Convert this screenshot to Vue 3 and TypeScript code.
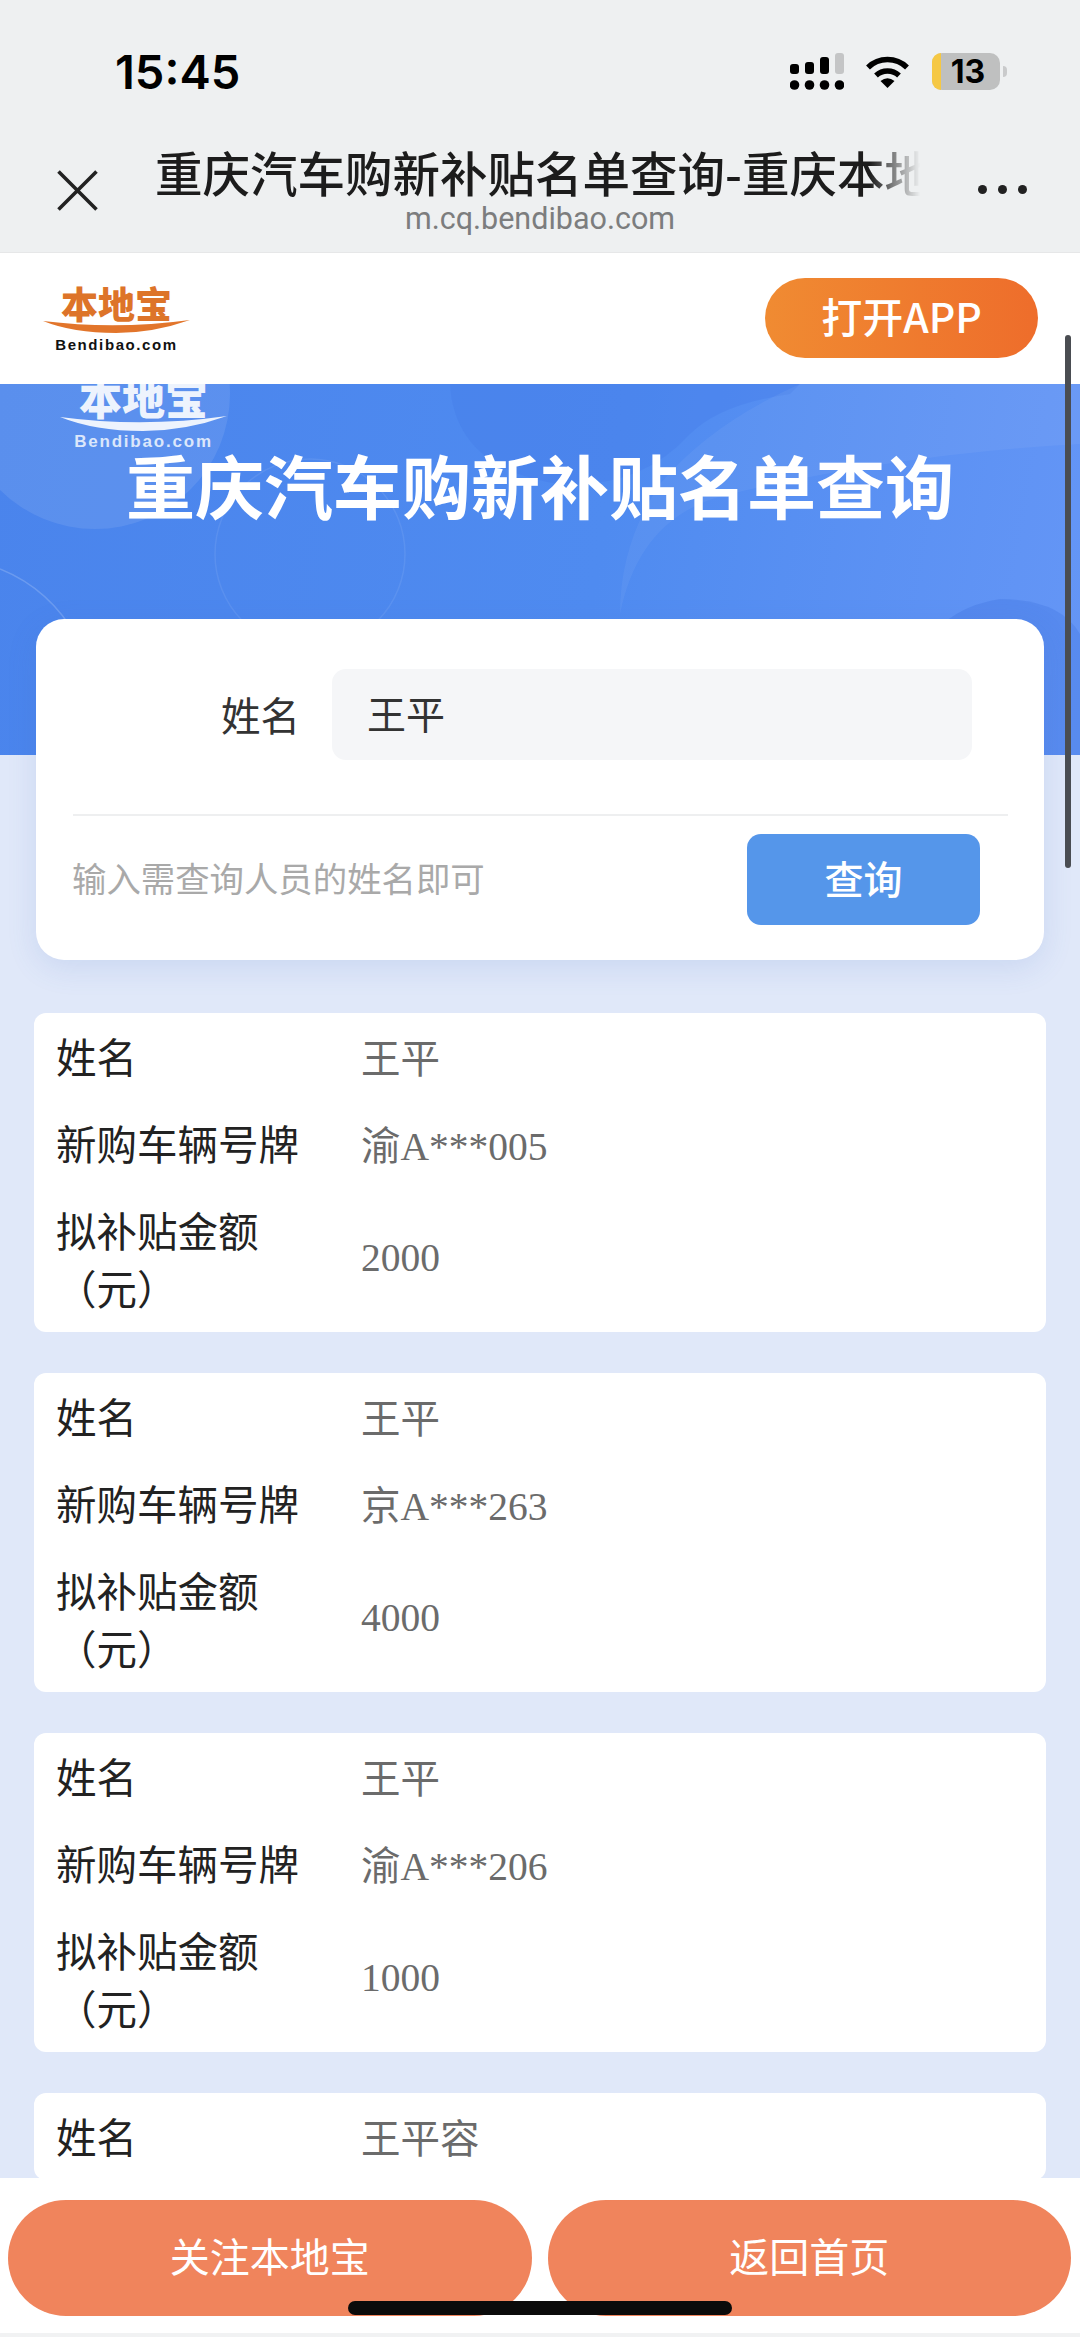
<template>
  <div class="page">
    <div class="topbar">
      <div class="status">
        <span class="time">15:45</span>
        <div class="status-icons">
          <svg class="signal" width="54" height="37" viewBox="0 0 54 37">
            <rect x="0" y="11" width="9" height="10" rx="3" fill="#000" />
            <rect x="15" y="9" width="9" height="12" rx="3" fill="#000" />
            <rect x="30" y="4" width="9" height="17" rx="3" fill="#000" />
            <rect x="45" y="0" width="9" height="21" rx="3" fill="#c4c5c6" />
            <circle cx="4.5" cy="32" r="4.8" fill="#000" />
            <circle cx="19.5" cy="32" r="4.8" fill="#000" />
            <circle cx="34.5" cy="32" r="4.8" fill="#000" />
            <circle cx="49.5" cy="32" r="4.8" fill="#000" />
          </svg>
          <svg class="wifi" width="45" height="33" viewBox="0 0 45 33">
            <path d="M3 12.5 A28 28 0 0 1 42 12.5" fill="none" stroke="#000" stroke-width="5.5" />
            <path d="M11 20.5 A17 17 0 0 1 34 20.5" fill="none" stroke="#000" stroke-width="5.5" />
            <path d="M15.5 26 Q22.5 20.5 29.5 26 L22.5 33 Z" fill="#000" />
          </svg>
          <div class="battery">
            <span class="battery-level"></span>
            <span class="battery-num">13</span>
            <span class="battery-nub"></span>
          </div>
        </div>
      </div>
      <div class="nav">
        <svg class="close" width="41" height="41" viewBox="0 0 41 41">
          <path d="M1.5 1.5 L39.5 39.5 M39.5 1.5 L1.5 39.5" stroke="#222" stroke-width="3.6" fill="none" />
        </svg>
        <div class="nav-title">
          <div class="nav-name">重庆汽车购新补贴名单查询-重庆本地宝</div>
          <div class="nav-url">m.cq.bendibao.com</div>
        </div>
        <div class="dots"><i></i><i></i><i></i></div>
      </div>
    </div>

    <header class="head">
      <div class="logo logo-orange">
        <div class="logo-cn">本地宝</div>
        <svg class="logo-arc" width="147" height="13" viewBox="0 0 147 13">
          <path d="M0 1 Q73 10 147 0 Q110 13 73 13 Q30 13 0 1 Z" />
        </svg>
        <div class="logo-en">Bendibao.com</div>
      </div>
      <button class="open-app"><span>打开APP</span></button>
    </header>

    <section class="banner">
      <svg class="banner-bg" width="1080" height="371" viewBox="0 0 1080 371">
        <circle cx="95" cy="10" r="135" fill="#fff" opacity="0.09" />
        <path d="M450 0 Q455 85 560 100 Q640 105 690 50 Q720 20 790 10 L800 0 Z" fill="#3f78e6" opacity="0.28" />
        <path d="M620 230 Q640 130 730 110 Q900 70 1080 60 L1080 0 L800 0 Q710 40 660 100 Q620 160 620 230 Z" fill="#fff" opacity="0.05" />
        <circle cx="310" cy="170" r="95" fill="none" stroke="#fff" stroke-width="1.5" opacity="0.08" />
        <path d="M0 185 Q50 205 78 255" fill="none" stroke="#fff" stroke-width="1.5" opacity="0.18" />
        <path d="M890 371 Q900 230 1000 215 Q1060 215 1080 250 L1080 371 Z" fill="#2f66d8" opacity="0.22" />
      </svg>
      <div class="logo logo-white">
        <div class="logo-cn">本地宝</div>
        <svg class="logo-arc" width="167" height="15" viewBox="0 0 167 15">
          <path d="M0 1 Q83 12 167 0 Q125 15 83 15 Q35 15 0 1 Z" />
        </svg>
        <div class="logo-en">Bendibao.com</div>
      </div>
      <h1 class="banner-title">重庆汽车购新补贴名单查询</h1>
    </section>

    <section class="search">
      <div class="search-row">
        <label class="search-label">姓名</label>
        <div class="search-input">王平</div>
      </div>
      <div class="search-line"></div>
      <div class="search-foot">
        <span class="search-hint">输入需查询人员的姓名即可</span>
        <button class="search-btn"><span>查询</span></button>
      </div>
    </section>

    <section class="results">
      <div v-for="(item, i) in records" :key="i" class="result">
        <div class="result-row">
          <div class="result-label">姓名</div>
          <div class="result-value">{{ item.name }}</div>
        </div>
        <template v-if="item.plate">
          <div class="result-row">
            <div class="result-label">新购车辆号牌</div>
            <div class="result-value">{{ item.plate }}</div>
          </div>
          <div class="result-row">
            <div class="result-label">拟补贴金额（元）</div>
            <div class="result-value result-amount">{{ item.amount }}</div>
          </div>
        </template>
      </div>
    </section>

    <div class="scrollbar"></div>

    <footer class="bottom">
      <button class="bottom-btn">关注本地宝</button>
      <button class="bottom-btn">返回首页</button>
      <div class="home-bar"></div>
    </footer>
  </div>
</template>

<script setup lang="ts">
interface ResultRecord {
  name: string
  plate?: string
  amount?: number
}

const records: ResultRecord[] = [
  { name: '王平', plate: '渝A***005', amount: 2000 },
  { name: '王平', plate: '京A***263', amount: 4000 },
  { name: '王平', plate: '渝A***206', amount: 1000 },
  { name: '王平容' },
]
</script>

<style>
html,
body {
  margin: 0;
  background: #e0e8f9;
}
</style>

<style scoped>
.page {
  position: relative;
  width: 1080px;
  height: 2337px;
  overflow: hidden;
  background: #e0e8f9;
  font-family: 'Noto Sans CJK SC', 'Liberation Sans', sans-serif;
}

.topbar {
  height: 253px;
  background: #eef0f1;
  box-sizing: border-box;
  padding-top: 48px;
  border-bottom: 1px solid #e6e7e8;
}

.status {
  display: flex;
  align-items: center;
  justify-content: space-between;
  height: 46px;
  padding: 0 80px 0 115px;
}

.time {
  font-family: Inter, 'Liberation Sans', sans-serif;
  font-size: 47px;
  font-weight: 600;
  color: #000;
}

.status-icons {
  display: flex;
  align-items: center;
}

.wifi {
  margin-left: 21px;
}

.battery {
  position: relative;
  display: flex;
  align-items: center;
  justify-content: center;
  margin-left: 22px;
  width: 68px;
  height: 37px;
  border-radius: 10px;
  background: #bfc0c0;
}

.battery-level {
  position: absolute;
  left: 0;
  top: 0;
  bottom: 0;
  width: 9px;
  border-radius: 10px 0 0 10px;
  background: #f5c844;
}

.battery-num {
  font-family: Inter, 'Liberation Sans', sans-serif;
  font-size: 32px;
  font-weight: 700;
  line-height: 37px;
  color: #000;
  margin-left: 4px;
}

.battery-nub {
  position: absolute;
  right: -7px;
  top: 13px;
  width: 4px;
  height: 11px;
  border-radius: 0 4px 4px 0;
  background: #c9cacb;
}

.nav {
  display: flex;
  align-items: flex-start;
  margin-top: 48px;
  padding-left: 57px;
}

.close {
  margin-top: 28px;
  flex: none;
}

.nav-title {
  margin-left: 57px;
  width: 770px;
  text-align: center;
}

.nav-name {
  font-size: 47.5px;
  font-weight: 500;
  line-height: 60px;
  color: #1c1c1c;
  white-space: nowrap;
  overflow: hidden;
  text-align: left;
  -webkit-mask-image: linear-gradient(to right, #000 715px, transparent 765px);
  mask-image: linear-gradient(to right, #000 715px, transparent 765px);
}

.nav-url {
  margin-top: 0;
  font-family: Roboto, 'Liberation Sans', sans-serif;
  font-size: 30.5px;
  line-height: 34px;
  color: #7c7d7e;
}

.dots {
  display: flex;
  gap: 11px;
  margin: 43px 0 0 53px;
}

.dots i {
  width: 9px;
  height: 9px;
  border-radius: 50%;
  background: #222;
}

.head {
  display: flex;
  align-items: flex-start;
  justify-content: space-between;
  height: 131px;
  background: #fff;
  padding: 0 42px 0 43px;
}

.logo {
  display: flex;
  flex-direction: column;
  align-items: center;
}

.logo > * {
  flex: none;
}

.logo-cn {
  font-weight: 900;
  white-space: nowrap;
}

.logo-en {
  font-family: 'Liberation Sans', sans-serif;
  font-weight: 700;
  white-space: nowrap;
}

.logo-orange {
  width: 147px;
  margin-top: 32px;
}

.logo-orange .logo-cn {
  font-size: 37px;
  line-height: 36px;
  color: #dd7429;
}

.logo-orange .logo-arc {
  fill: #e2752b;
  margin-top: -1px;
}

.logo-orange .logo-en {
  margin-top: 3px;
  font-size: 15px;
  line-height: 18px;
  letter-spacing: 1.6px;
  color: #111;
}

.open-app {
  margin-top: 25px;
  width: 273px;
  height: 80px;
  border: none;
  border-radius: 40px;
  background: linear-gradient(to right, #f08b32, #ee6d2b);
  color: #fff;
  font-family: inherit;
  font-size: 41px;
  font-weight: 500;
  padding: 0 0 6px;
}

.banner {
  position: relative;
  height: 371px;
  overflow: hidden;
  background: linear-gradient(100deg, #4a84ec 0%, #4f8bf0 55%, #6596f6 100%);
}

.banner-bg {
  position: absolute;
  left: 0;
  top: 0;
}

.logo-white {
  position: relative;
  width: 167px;
  height: 69px;
  margin: -9px 0 0 60px;
}

.logo-white .logo-cn {
  font-size: 43px;
  line-height: 42px;
  color: #edf3fd;
}

.logo-white .logo-arc {
  fill: #edf3fd;
  margin-top: -1px;
}

.logo-white .logo-en {
  margin-top: 3px;
  font-size: 17px;
  line-height: 16px;
  letter-spacing: 1.8px;
  color: #dbe7fb;
}

.banner-title {
  position: relative;
  margin: 0;
  text-align: center;
  font-size: 69px;
  font-weight: 700;
  line-height: 80px;
  color: #fff;
  white-space: nowrap;
}

.search {
  position: relative;
  box-sizing: border-box;
  height: 341px;
  margin: -136px 36px 0;
  padding: 50px 36px 0 37px;
  background: #fff;
  border-radius: 28px;
  box-shadow: 0 8px 30px rgba(70, 110, 200, 0.14);
}

.search-row {
  display: flex;
  align-items: center;
}

.search-label {
  width: 227px;
  padding-bottom: 3px;
  text-align: right;
  font-size: 39.5px;
  color: #333;
}

.search-input {
  margin-left: 32px;
  box-sizing: border-box;
  width: 640px;
  height: 91px;
  padding-left: 35px;
  border-radius: 14px;
  background: #f5f6f8;
  font-size: 39px;
  line-height: 87px;
  color: #333;
}

.search-line {
  height: 2px;
  margin-top: 54px;
  background: #eeeff0;
}

.search-foot {
  display: flex;
  align-items: center;
  justify-content: space-between;
  margin-top: 18px;
  padding-right: 28px;
}

.search-hint {
  margin: -6px 0 0 -1px;
  font-size: 34.4px;
  color: #a9a9a9;
}

.search-btn {
  width: 233px;
  height: 91px;
  border: none;
  border-radius: 14px;
  background: #5596ea;
  color: #fff;
  font-family: inherit;
  font-size: 39px;
  font-weight: 500;
  padding: 0 0 6px;
}

.results {
  display: flex;
  flex-direction: column;
  gap: 41px;
  margin-top: 53px;
  padding: 0 34px;
}

.result {
  background: #fff;
  border-radius: 12px;
}

.result-row {
  display: grid;
  grid-template-columns: 305px 1fr;
  align-items: center;
  padding: 14.5px 0;
}

.result-label {
  box-sizing: border-box;
  margin: -1px 0 1px;
  padding: 0 30px 0 22px;
  font-size: 40.5px;
  line-height: 58px;
  color: #222;
}

.result-value {
  margin-bottom: -3px;
  padding: 3px 0 0 22px;
  font-family: 'Liberation Serif', 'Noto Sans CJK SC', serif;
  font-size: 39.5px;
  line-height: 58px;
  color: #6b6b6b;
}

.result-amount {
  margin: -3px 0 0;
  padding-top: 0;
}

.scrollbar {
  position: absolute;
  left: 1065px;
  top: 335px;
  width: 6px;
  height: 533px;
  border-radius: 3px;
  background: #4a4d52;
}

.bottom {
  position: absolute;
  left: 0;
  right: 0;
  bottom: 0;
  display: flex;
  gap: 16px;
  box-sizing: border-box;
  height: 159px;
  padding: 22px 9px 0 8px;
  background: #fff;
  border-bottom: 4px solid #f1f2f3;
}

.bottom-btn {
  flex: 1;
  height: 116px;
  border: none;
  border-radius: 58px;
  background: #f0845c;
  color: #fff;
  font-family: inherit;
  font-size: 40px;
  padding: 0 0 6px;
}

.home-bar {
  position: absolute;
  left: 348px;
  top: 123px;
  width: 384px;
  height: 14px;
  border-radius: 7px;
  background: #0b0b0b;
}
</style>
